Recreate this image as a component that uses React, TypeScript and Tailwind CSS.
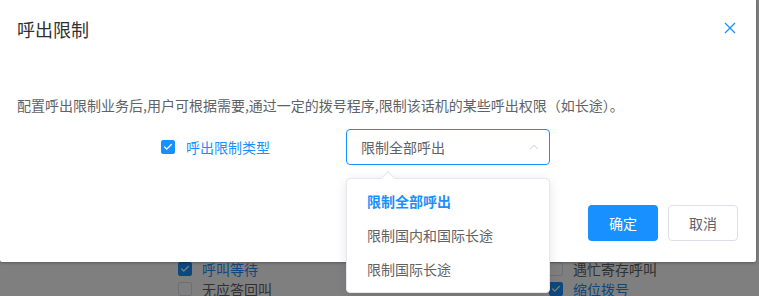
import { ChevronUp, Check } from 'lucide-react'

const bgOptions = [
  { label: '呼叫等待', checked: true },
  { label: '遇忙寄存呼叫', checked: false },
  { label: '无应答回叫', checked: false },
  { label: '缩位拨号', checked: true },
]

const options = ['限制全部呼出', '限制国内和国际长途', '限制国际长途']

function Box({ checked }: { checked: boolean }) {
  return (
    <span
      className={`flex h-[14px] w-[14px] shrink-0 items-center justify-center rounded-[2px] border ${
        checked ? 'border-[#1890ff] bg-[#1890ff]' : 'border-[#dcdfe6] bg-white'
      }`}
    >
      {checked && <Check className="h-[10px] w-[10px] text-white" strokeWidth={3} />}
    </span>
  )
}

export default function App() {
  return (
    <div className="relative h-[296px] w-[759px] overflow-hidden bg-white font-[family-name:'Noto_Sans_CJK_SC',sans-serif]">
      {/* page below the dialog */}
      <div className="grid grid-cols-[371px_200px] pl-[178px] pt-[259px]">
        {bgOptions.map((o) => (
          <div key={o.label} className="flex h-5 items-center gap-[10px]">
            <Box checked={o.checked} />
            <span className={`text-[14px] ${o.checked ? 'text-[#1890ff]' : 'text-[#606266]'}`}>{o.label}</span>
          </div>
        ))}
      </div>

      <div className="absolute inset-0 bg-black/50" />

      {/* dialog */}
      <div className="absolute left-0 top-0 h-[262px] w-[756px] rounded-b-[2px] bg-white shadow-[0_1px_3px_rgba(0,0,0,0.3)]">
        <div className="px-[17px] pt-[17px]">
          <h2 className="text-[18px] leading-6 text-[#303133]">呼出限制</h2>
        </div>
        <button className="absolute left-[724px] top-[22px] text-[#1890ff]">
          <svg width="12" height="12" viewBox="0 0 12 12" fill="none" stroke="currentColor" strokeWidth="1.3">
            <path d="M1 1l10 10M11 1L1 11" />
          </svg>
        </button>

        <p className="mt-[54px] px-[17px] text-[14px] leading-5 text-[#606266]">
          配置呼出限制业务后,用户可根据需要,通过一定的拨号程序,限制该话机的某些呼出权限（如长途）。
        </p>

        <div className="mt-[14px] flex h-9 items-center pl-[161px]">
          <label className="flex w-[185px] items-center gap-[11px]">
            <Box checked />
            <span className="text-[14px] text-[#1890ff]">呼出限制类型</span>
          </label>
          <div className="flex h-9 w-[204px] items-center justify-between rounded-[4px] border border-[#1890ff] pl-[14px] pr-[8px]">
            <span className="text-[14px] text-[#606266]">限制全部呼出</span>
            <ChevronUp className="h-[14px] w-[14px] text-[#c0c4cc]" strokeWidth={1.5} />
          </div>
        </div>

        <div className="mt-[40px] flex justify-end gap-[10px] pr-[18px]">
          <button className="h-9 w-[70px] rounded-[4px] bg-[#1890ff] text-[14px] text-white">确定</button>
          <button className="h-9 w-[70px] rounded-[4px] border border-[#dcdfe6] bg-white text-[14px] text-[#606266]">
            取消
          </button>
        </div>
      </div>

      {/* select dropdown */}
      <div className="absolute left-[346px] top-[178px] w-[204px] rounded-[4px] border border-[#e4e7ed] bg-white pb-[6px] pt-[5px] shadow-[0_2px_12px_rgba(0,0,0,0.1)]">
        <span className="absolute -top-[6px] left-[36px] h-[10px] w-[10px] rotate-45 border-l border-t border-[#e4e7ed] bg-white" />
        {options.map((o, i) => (
          <div
            key={o}
            className={`relative h-[34px] px-5 text-[14px] leading-[34px] ${
              i === 0 ? 'font-bold text-[#1890ff]' : 'text-[#606266]'
            }`}
          >
            {o}
          </div>
        ))}
      </div>
    </div>
  )
}
